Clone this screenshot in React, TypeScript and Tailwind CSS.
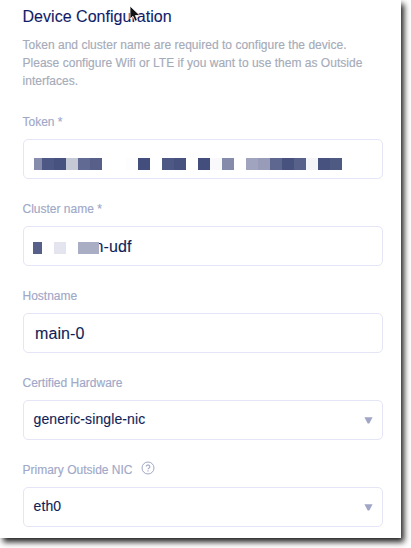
import type { ReactNode } from "react";

function Field({ label, help, children }: { label: string; help?: boolean; children: ReactNode }) {
  return (
    <div className="mb-[13px]">
      <div className="flex h-[34px] items-center text-[12px] text-[#a0a8c8] [-webkit-text-stroke:0.15px]">
        <span className="-ml-[0.5px]">{label}</span>
        {help && (
          <svg className="mb-1 ml-[8.5px]" width="14" height="14" viewBox="0 0 14 14" fill="none" stroke="#a0a8c8">
            <circle cx="7" cy="7" r="6" />
            <path d="M5.2 5.6a1.8 1.7 0 1 1 2.7 1.5c-.6.4-.9.6-.9 1.2M7 9.3v1.1" strokeWidth="1.1" />
          </svg>
        )}
      </div>
      <div className="relative flex h-10 items-center rounded-[5px] border border-[#e4e6f7] text-[#0f1e57] [-webkit-text-stroke:0.12px]">
        {children}
      </div>
    </div>
  );
}

function Caret() {
  return (
    <svg className="mt-px mr-[9px] ml-auto" width="9" height="7" viewBox="0 0 9 7">
      <path d="M.4.3h8.2L5.3 6.5H3.7Z" fill="#a0a6c6" />
    </svg>
  );
}

export default function App() {
  return (
    <div className="h-[548px] w-[411px] overflow-hidden bg-white font-['Liberation_Sans',Arial,sans-serif]">
      <main className="relative h-[538px] w-[401px] bg-white pt-[7px] pr-[18px] pl-[23px] shadow-[3px_4px_6px_0px_rgba(0,0,0,0.88)]">
        <h1 className="-ml-[0.5px] h-[29px] text-[16px] leading-[20px] tracking-[0.03px] text-[#101c68] [-webkit-text-stroke:0.1px]">
          Device Configuration
        </h1>
        <p className="mb-[15px] -ml-[0.5px] text-[12px] leading-[18px] tracking-[0.02px] whitespace-nowrap text-[#a5abb9] [-webkit-text-stroke:0.15px]">
          Token and cluster name are required to configure the device.
          <br />
          Please configure Wifi or LTE if you want to use them as Outside
          <br />
          interfaces.
        </p>
        <Field label="Token *">
          <div className="mt-[9px] ml-[10px] flex h-3">
            <i className="w-2 bg-[#858cac]" />
            <i className="w-3 bg-[#4d5884]" />
            <i className="w-3 bg-[#47527f]" />
            <i className="w-3 bg-[#c5c8d5]" />
            <i className="w-3 bg-[#616a92]" />
            <i className="w-3 bg-[#586089]" />
            <i className="ml-6 w-3 bg-[#fdfdfd]" />
            <i className="w-3 bg-[#434e7c]" />
            <i className="ml-3 w-3 bg-[#4d5885]" />
            <i className="w-3 bg-[#47527f]" />
            <i className="ml-3 w-3 bg-[#434e7c]" />
            <i className="w-3 bg-[#f9f9fb]" />
            <i className="w-3 bg-[#858baa]" />
            <i className="ml-3 w-3 bg-[#a0a4bf]" />
            <i className="w-3 bg-[#989cb8]" />
            <i className="w-3 bg-[#5d678f]" />
            <i className="w-3 bg-[#47527f]" />
            <i className="w-3 bg-[#586189]" />
            <i className="w-3 bg-[#f4f5f7]" />
            <i className="w-3 bg-[#47527f]" />
            <i className="w-3 bg-[#4f5a83]" />
          </div>
        </Field>
        <Field label="Cluster name *">
          <div className="mt-[3px] ml-[9px] flex h-3">
            <i className="w-[9px] bg-[#566089]" />
            <i className="ml-3 w-3 bg-[#e3e4ed]" />
            <i className="z-10 ml-3 w-[21px] bg-[#a9aec5]" />
          </div>
          <span className="mt-[2px] -ml-[4.5px] text-[16px] tracking-[0.15px]">n-udf</span>
        </Field>
        <Field label="Hostname">
          <span className="mt-[2px] ml-[11px] text-[16px] tracking-[0.1px]">main-0</span>
        </Field>
        <Field label="Certified Hardware">
          <span className="mb-px ml-[9.5px] text-[14px] tracking-[0.12px]">generic-single-nic</span>
          <Caret />
        </Field>
        <Field label="Primary Outside NIC" help>
          <span className="mb-px ml-[9.5px] text-[14px] tracking-[0.12px]">eth0</span>
          <Caret />
        </Field>
        <svg className="absolute top-[5px] left-[129px]" width="12" height="18" viewBox="0 0 12 18">
          <path d="M1 1v13l3-2.7 2 5 2.4-1-2-4.8H11Z" fill="#151515" stroke="#fff" strokeWidth=".8" />
        </svg>
      </main>
    </div>
  );
}
